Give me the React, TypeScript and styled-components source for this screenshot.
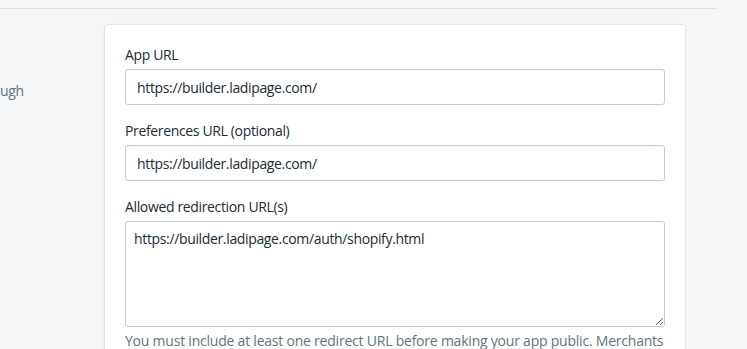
import React from 'react';
import styled, { createGlobalStyle } from 'styled-components';

const GlobalStyle = createGlobalStyle`
  html, body {
    margin: 0;
    padding: 0;
    background: #f4f6f8;
    font-family: "Open Sans", "Noto Sans", sans-serif;
    color: #212b36;
    letter-spacing: -0.35px;
    overflow: hidden;
  }
`;

const S = {
  Page: styled.div`
    width: 747px;
    height: 349px;
    overflow: hidden;
  `,
  Divider: styled.hr`
    width: 717px;
    height: 1px;
    margin: 8px 0 0 0;
    border: none;
    background: #dfe3e8;
  `,
  Section: styled.div`
    display: flex;
    padding-top: 16px;
  `,
  Aside: styled.div`
    width: 105px;
    flex-shrink: 0;
    padding-top: 56px;
    overflow: hidden;

    p {
      margin: 0;
      font-size: 14px;
      line-height: 20px;
      color: #637381;
    }
  `,
  Card: styled.div`
    width: 580px;
    box-sizing: border-box;
    padding: 20px 20px 0;
    background: white;
    border-radius: 3px;
    box-shadow: 0 0 0 1px rgba(63, 63, 68, 0.05), 0 1px 3px 0 rgba(63, 63, 68, 0.15);
  `,
  Field: styled.div`
    margin-bottom: 16px;
  `,
  Label: styled.label`
    display: block;
    margin-bottom: 4px;
    font-size: 14px;
    line-height: 20px;
  `,
  Input: styled.input`
    display: block;
    width: 540px;
    height: 36px;
    box-sizing: border-box;
    padding: 0 11px;
    border: 1px solid #c4cdd5;
    border-radius: 3px;
    font-family: inherit;
    font-size: 14px;
    letter-spacing: inherit;
    color: #212b36;
    background: white;
    box-shadow: inset 0 1px 0 0 rgba(99, 115, 129, 0.05);
  `,
  TextArea: styled.textarea`
    display: block;
    width: 540px;
    height: 106px;
    box-sizing: border-box;
    padding: 7px 8px;
    border: 1px solid #c4cdd5;
    border-radius: 3px;
    font-family: inherit;
    font-size: 14px;
    letter-spacing: inherit;
    line-height: 20px;
    color: #212b36;
    resize: vertical;
  `,
  Help: styled.p`
    margin: 4px 0 0;
    font-size: 14px;
    line-height: 20px;
    letter-spacing: -0.22px;
    color: #637381;
    white-space: nowrap;
  `,
};

export default function App() {
  return (
    <S.Page>
      <GlobalStyle />
      <S.Divider />
      <S.Section>
        <S.Aside>
          <p>ugh</p>
        </S.Aside>
        <S.Card>
          <S.Field>
            <S.Label>App URL</S.Label>
            <S.Input defaultValue="https://builder.ladipage.com/" />
          </S.Field>
          <S.Field>
            <S.Label>Preferences URL (optional)</S.Label>
            <S.Input defaultValue="https://builder.ladipage.com/" />
          </S.Field>
          <S.Field>
            <S.Label>Allowed redirection URL(s)</S.Label>
            <S.TextArea defaultValue="https://builder.ladipage.com/auth/shopify.html" />
            <S.Help>
              You must include at least one redirect URL before making your app public. Merchants
            </S.Help>
          </S.Field>
        </S.Card>
      </S.Section>
    </S.Page>
  );
}
